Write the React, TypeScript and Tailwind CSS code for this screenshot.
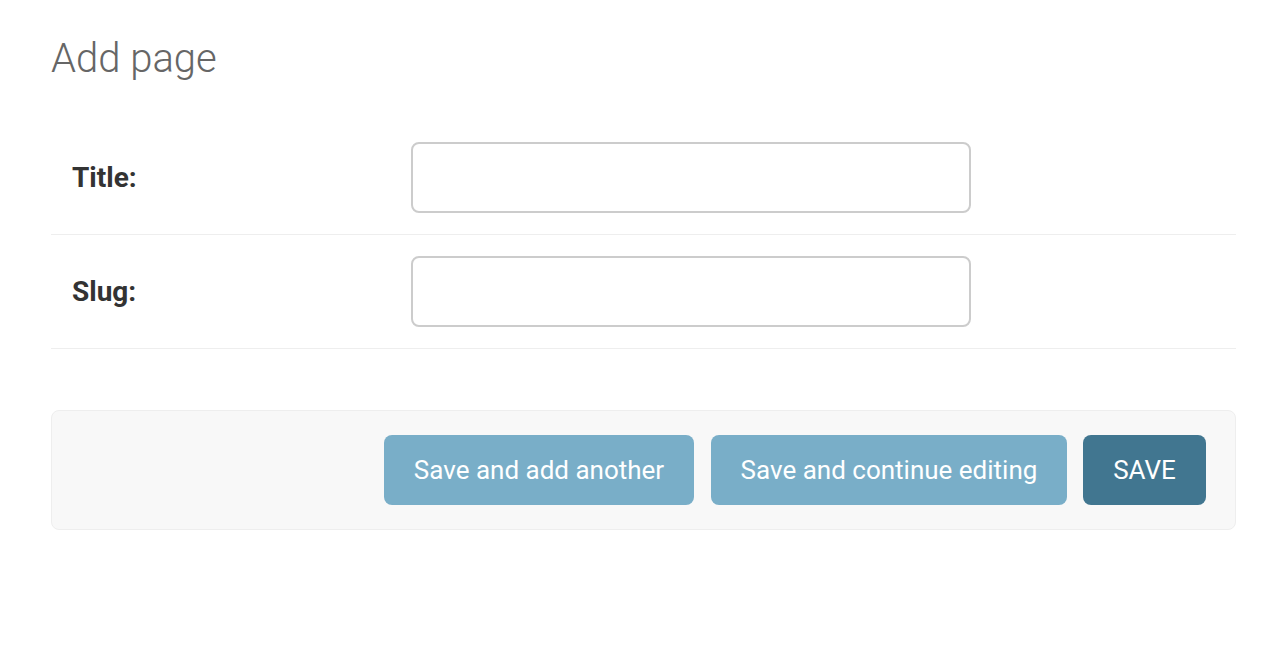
export default function App() {
  return (
    <div className="min-h-screen bg-white pl-[51px] pr-[52px] pt-[35px] font-['Roboto',sans-serif]">
      <h1 className="text-[40px] font-light leading-[1.2] text-[#666]">Add page</h1>

      <form className="mt-[38px]" onSubmit={(e) => e.preventDefault()}>
        <div>
          {["Title", "Slug"].map((label) => (
            <div key={label} className="flex items-center border-b border-[#eee] py-[21px] pl-[21px]">
              <label className="w-[339px] text-[28px] font-bold leading-none text-[#333]">{label}:</label>
              <input
                type="text"
                className="h-[71px] w-[560px] rounded-[8px] border-2 border-[#ccc] bg-white px-3 text-[26px] outline-none"
              />
            </div>
          ))}
        </div>

        <div className="mt-[61px] flex justify-end rounded-[8px] border border-[#eee] bg-[#f8f8f8] py-[24px] pr-[29px]">
          <button type="button" className="h-[70px] w-[310px] rounded-[8px] bg-[#79aec8] text-[26px] text-white">
            Save and add another
          </button>
          <button type="button" className="ml-[17px] h-[70px] w-[356px] rounded-[8px] bg-[#79aec8] text-[26px] text-white">
            Save and continue editing
          </button>
          <button type="submit" className="ml-[16px] h-[70px] w-[123px] rounded-[8px] bg-[#417690] text-[26px] text-white">
            SAVE
          </button>
        </div>
      </form>
    </div>
  );
}
